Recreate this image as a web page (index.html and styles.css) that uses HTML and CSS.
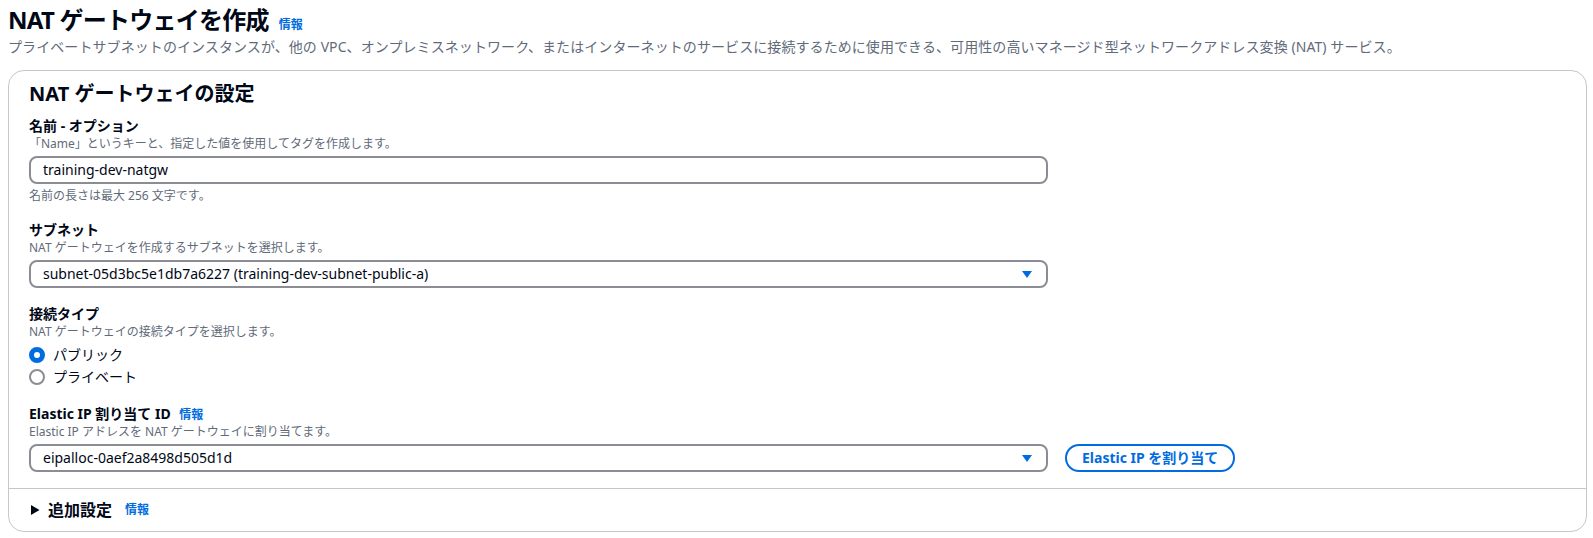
FILE: index.html
```html
<!DOCTYPE html>
<html lang="ja">
<head>
<meta charset="utf-8">
<title>NAT ゲートウェイを作成</title>
<link rel="stylesheet" href="styles.css">
</head>
<body>
<div class="page">
  <header class="page-header">
    <h1 class="page-title">NAT ゲートウェイを作成 <a class="info" href="#">情報</a></h1>
    <p class="page-desc">プライベートサブネットのインスタンスが、他の VPC、オンプレミスネットワーク、またはインターネットのサービスに接続するために使用できる、可用性の高いマネージド型ネットワークアドレス変換 (NAT) サービス。</p>
  </header>

  <section class="panel">
    <div class="panel-body">
      <h2 class="panel-title">NAT ゲートウェイの設定</h2>

      <div class="fields">
        <div class="field">
          <div class="label">名前 - オプション</div>
          <div class="desc">「Name」というキーと、指定した値を使用してタグを作成します。</div>
          <div class="control">
            <div class="input">training-dev-natgw</div>
          </div>
          <div class="hint">名前の長さは最大 256 文字です。</div>
        </div>

        <div class="field">
          <div class="label">サブネット</div>
          <div class="desc">NAT ゲートウェイを作成するサブネットを選択します。</div>
          <div class="control">
            <div class="input select">
              <span class="value">subnet-05d3bc5e1db7a6227 (training-dev-subnet-public-a)</span>
              <svg class="caret" width="10" height="7" viewBox="0 0 10 7"><polygon points="0,0 10,0 5,7" fill="#006ce0"/></svg>
            </div>
          </div>
        </div>

        <div class="field">
          <div class="label">接続タイプ</div>
          <div class="desc">NAT ゲートウェイの接続タイプを選択します。</div>
          <div class="radios">
            <div class="radio">
              <span class="radio-dot checked"></span>
              <span class="radio-label">パブリック</span>
            </div>
            <div class="radio">
              <span class="radio-dot"></span>
              <span class="radio-label">プライベート</span>
            </div>
          </div>
        </div>

        <div class="field">
          <div class="label">Elastic IP 割り当て ID <a class="info label-info" href="#">情報</a></div>
          <div class="desc">Elastic IP アドレスを NAT ゲートウェイに割り当てます。</div>
          <div class="control control-row">
            <div class="input select">
              <span class="value">eipalloc-0aef2a8498d505d1d</span>
              <svg class="caret" width="10" height="7" viewBox="0 0 10 7"><polygon points="0,0 10,0 5,7" fill="#006ce0"/></svg>
            </div>
            <button class="btn" type="button">Elastic IP を割り当て</button>
          </div>
        </div>
      </div>
    </div>

    <div class="panel-footer">
      <svg class="expand" width="12" height="16" viewBox="0 0 12 16"><polygon points="2,3 10.5,8 2,13" fill="#000716"/></svg>
      <span class="footer-title">追加設定</span>
      <a class="info footer-info" href="#">情報</a>
    </div>
  </section>
</div>
</body>
</html>
```

FILE: styles.css
```css
* {
  box-sizing: border-box;
}

body {
  margin: 0;
  background: #ffffff;
  color: #000716;
  font-family: "Noto Sans", "Noto Sans CJK JP", sans-serif;
}

.page {
  padding: 5px 6px 0 8px;
}

.page-title {
  margin: 0;
  display: flex;
  align-items: baseline;
  gap: 10px;
  font-size: 24px;
  line-height: 30px;
  font-weight: 700;
  letter-spacing: -0.75px;
}

.info {
  font-size: 12px;
  line-height: 16px;
  font-weight: 700;
  color: #006ce0;
  text-decoration: none;
  letter-spacing: 0;
}

.page-desc {
  margin: 2px 0 0;
  font-size: 14px;
  line-height: 20px;
  color: #5f6b7a;
  white-space: nowrap;
  letter-spacing: 0.08px;
}

.panel {
  margin-top: 13px;
  border: 1px solid #c6c6cd;
  border-radius: 16px;
  background: #ffffff;
}

.panel-body {
  padding: 11px 20px 16px;
}

.panel-title {
  margin: 0;
  font-size: 20px;
  line-height: 24px;
  font-weight: 700;
}

.fields {
  margin-top: 10px;
  display: flex;
  flex-direction: column;
  gap: 16px;
}

.label {
  font-size: 14px;
  line-height: 20px;
  font-weight: 700;
}

.label-info {
  margin-left: 5px;
}

.desc,
.hint {
  font-size: 12px;
  line-height: 16px;
  color: #5f6b7a;
}

.hint {
  margin-top: 4px;
}

.control {
  margin-top: 4px;
}

.control-row {
  display: flex;
  align-items: center;
  gap: 17px;
}

.input {
  width: 1019px;
  height: 28px;
  border: 2px solid #8c8c94;
  border-radius: 8px;
  padding: 0 14px 0 12px;
  font-size: 14px;
  line-height: 24px;
  color: #000716;
  display: flex;
  align-items: center;
}

.select {
  justify-content: space-between;
}

.caret {
  display: block;
}

.radios {
  margin-top: 4px;
  display: flex;
  flex-direction: column;
}

.radio {
  height: 22px;
  display: flex;
  align-items: center;
  gap: 8px;
}

.radio-dot {
  width: 16px;
  height: 16px;
  border-radius: 50%;
  border: 2px solid #8c8c94;
  background: #ffffff;
  flex: none;
}

.radio-dot.checked {
  border: 5px solid #006ce0;
}

.radio-label {
  font-size: 14px;
  line-height: 20px;
}

.btn {
  height: 28px;
  padding: 0 15px;
  border: 2px solid #006ce0;
  border-radius: 20px;
  background: #ffffff;
  color: #006ce0;
  font-family: inherit;
  font-size: 14px;
  font-weight: 700;
  line-height: 20px;
}

.panel-footer {
  border-top: 1px solid #c6c6cd;
  height: 43px;
  padding: 0 20px;
  display: flex;
  align-items: center;
}

.expand {
  display: block;
  margin-right: 7px;
}

.footer-title {
  font-size: 16px;
  line-height: 20px;
  font-weight: 700;
}

.footer-info {
  margin-left: 13px;
}
```
